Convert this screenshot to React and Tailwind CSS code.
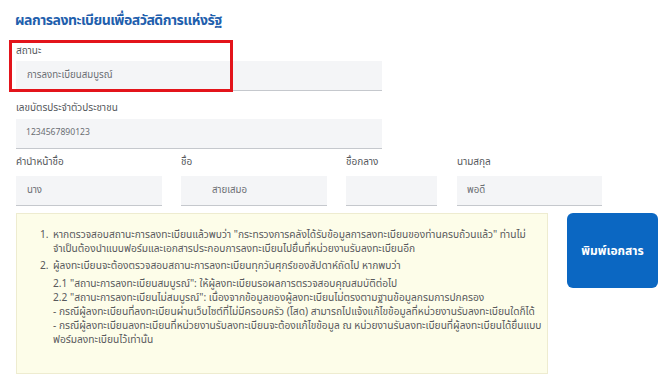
export default function App() {
  const font = { fontFamily: '"Noto Sans Thai", "Noto Sans", "Open Sans", sans-serif' };
  const input = "h-[30px] bg-[#f4f5f7] border-b border-[#c5c8cd] flex items-center text-[9.7px] text-[#6b6e73]";
  const label = "text-[10px] text-[#55585c] leading-[12px]";
  return (
    <div className="w-[670px] h-[391px] bg-white relative overflow-hidden" style={font}>
      <div className="pl-[15px] pr-[12px] pt-[10px]">
        <h1 className="text-[14px] font-bold text-[#1f60ad] leading-[22px] tracking-[-0.5px]">ผลการลงทะเบียนเพื่อสวัสดิการแห่งรัฐ</h1>

        <div className="mt-[13px] w-[367px] pl-[1px]">
          <div className={label}>สถานะ</div>
          <div className={`${input} mt-[4px] pl-[11px]`}>การลงทะเบียนสมบูรณ์</div>
        </div>

        <div className="mt-[11px] w-[367px] pl-[1px]">
          <div className={label}>เลขบัตรประจำตัวประชาชน</div>
          <div className={`${input} mt-[5px] pl-[10px] !text-[8.6px]`}>1234567890123</div>
        </div>

        <div className="mt-[7px] flex pl-[1px]">
          <div className="w-[146px]">
            <div className={label}>คำนำหน้าชื่อ</div>
            <div className={`${input} mt-[8px] pl-[11px]`}>นาง</div>
          </div>
          <div className="w-[146px] ml-[19px]">
            <div className={label}>ชื่อ</div>
            <div className={`${input} mt-[8px] pl-[31px]`}>สายเสมอ</div>
          </div>
          <div className="w-[91px] ml-[19px]">
            <div className={label}>ชื่อกลาง</div>
            <div className={`${input} mt-[8px] pl-[10px]`}></div>
          </div>
          <div className="w-[145px] ml-[20px]">
            <div className={label}>นามสกุล</div>
            <div className={`${input} mt-[8px] pl-[10px]`}>พอดี</div>
          </div>
        </div>

        <div className="mt-[7px] flex items-start pl-[1px]">
          <div className="w-[532px] h-[161px] bg-[#fdfde9] border border-[#eeecd0] pl-[23px] pt-[14px] text-[10.2px] leading-[14px] text-[#58595c] whitespace-nowrap">
            <div className="flex">
              <span className="w-[13px]">1.</span>
              <span>หากตรวจสอบสถานะการลงทะเบียนแล้วพบว่า "กระทรวงการคลังได้รับข้อมูลการลงทะเบียนของท่านครบถ้วนแล้ว" ท่านไม่<br />จำเป็นต้องนำแบบฟอร์มและเอกสารประกอบการลงทะเบียนไปยื่นที่หน่วยงานรับลงทะเบียนอีก</span>
            </div>
            <div className="flex mt-[3px]">
              <span className="w-[13px]">2.</span>
              <span>ผู้ลงทะเบียนจะต้องตรวจสอบสถานะการลงทะเบียนทุกวันศุกร์ของสัปดาห์ถัดไป หากพบว่า</span>
            </div>
            <div className="pl-[13px] mt-[4px]">
              <div>2.1 "สถานะการลงทะเบียนสมบูรณ์": ให้ผู้ลงทะเบียนรอผลการตรวจสอบคุณสมบัติต่อไป</div>
              <div>2.2 "สถานะการลงทะเบียนไม่สมบูรณ์": เนื่องจากข้อมูลของผู้ลงทะเบียนไม่ตรงตามฐานข้อมูลกรมการปกครอง</div>
              <div>- กรณีผู้ลงทะเบียนที่ลงทะเบียนผ่านเว็บไซต์ที่ไม่มีครอบครัว (โสด) สามารถไปแจ้งแก้ไขข้อมูลที่หน่วยงานรับลงทะเบียนใดก็ได้</div>
              <div>- กรณีผู้ลงทะเบียนลงทะเบียนที่หน่วยงานรับลงทะเบียนจะต้องแก้ไขข้อมูล ณ หน่วยงานรับลงทะเบียนที่ผู้ลงทะเบียนได้ยื่นแบบ</div>
              <div>ฟอร์มลงทะเบียนไว้เท่านั้น</div>
            </div>
          </div>
          <button className="ml-[19px] w-[91px] h-[75px] rounded-[6px] bg-[#0b67c2] text-white text-[12px] font-bold flex items-center justify-center">พิมพ์เอกสาร</button>
        </div>
      </div>

      <div className="absolute left-[9px] top-[40px] w-[224px] h-[52px] border-[3px] border-[#e3141b] pointer-events-none" />
    </div>
  );
}
